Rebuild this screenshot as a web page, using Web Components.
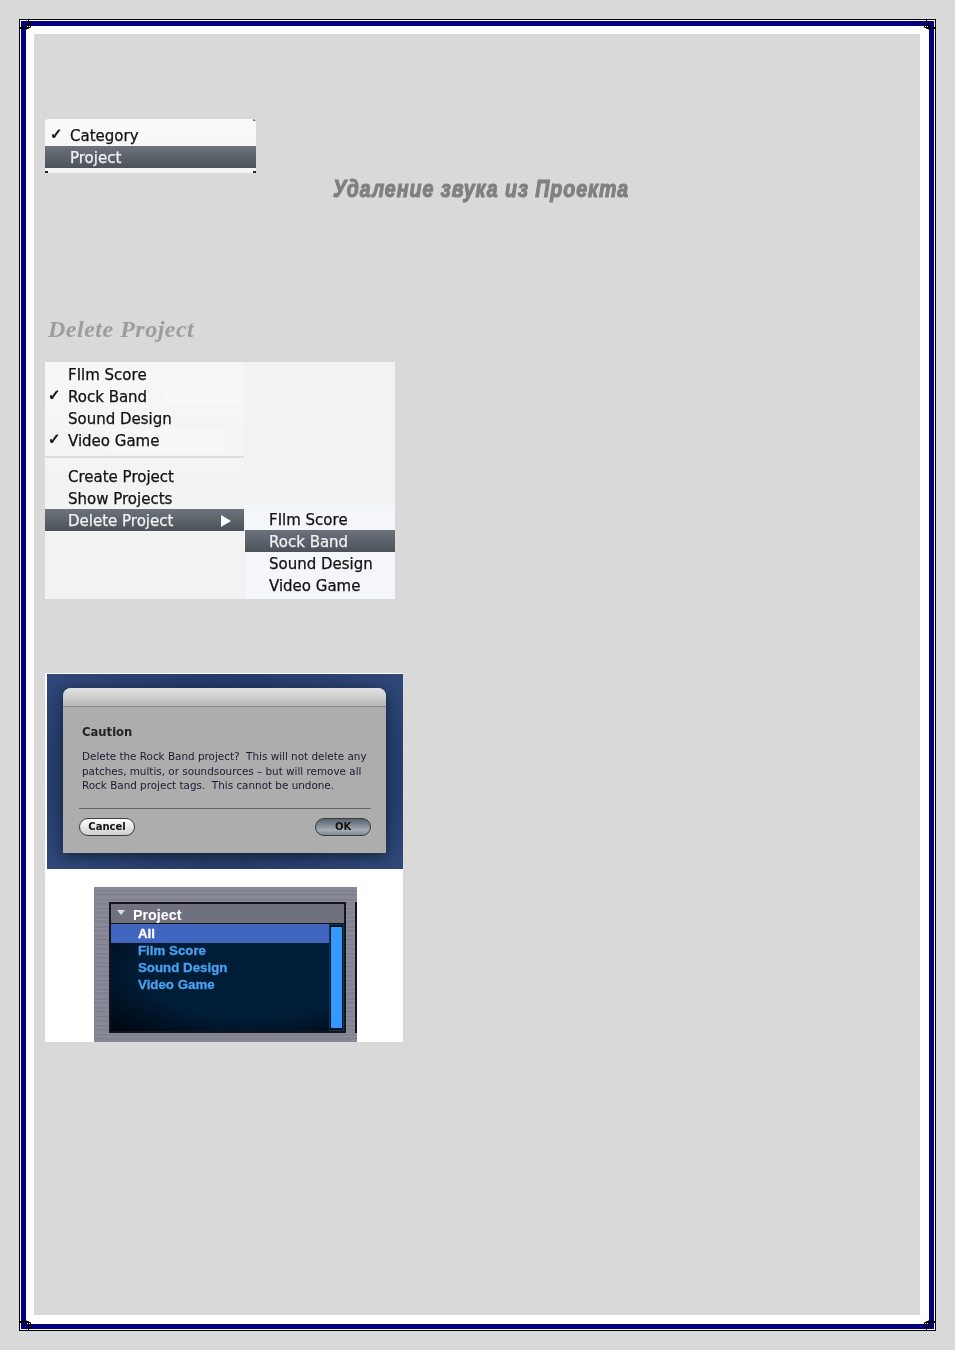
<!DOCTYPE html>
<html><head><meta charset="utf-8"><style>
html,body{margin:0;padding:0;background:#d9d9d9;height:1350px;overflow:hidden}
</style></head><body>
<page-frame>
  <mac-menu style="width:211px;height:54px">
    <menu-row check>Category</menu-row>
    <menu-row hi>Project</menu-row>
  </mac-menu>
  <h-title></h-title>
  <h-sub></h-sub>
  <menu-figure></menu-figure>
  <caution-dialog></caution-dialog>
  <project-panel></project-panel>
</page-frame>
<script>
const FONT='"DejaVu Sans","Noto Sans",sans-serif';
class PageFrame extends HTMLElement{constructor(){super();this.attachShadow({mode:'open'}).innerHTML=`<style>
:host{display:block;position:relative;box-sizing:border-box;width:917px;height:1312px;margin:19px 0 0 19px;border:1px solid #000;padding:1px;background:#fff}
.navy{box-sizing:border-box;height:100%;border:5px solid #000080;background:#fff;padding:8px 9px 9px 8px}
.inner{box-sizing:border-box;height:100%;background:#d9d9d9;padding:85px 0 0 11px;overflow:hidden}
svg{position:absolute;width:14px;height:14px;fill:none;stroke:#000;stroke-width:1}
.tl{left:-1px;top:-1px}.tr{right:-1px;top:-1px;transform:scaleX(-1)}.bl{left:-1px;bottom:-1px;transform:scaleY(-1)}.br{right:-1px;bottom:-1px;transform:scale(-1)}
</style><div class="navy"><div class="inner"><slot></slot></div></div>
${['tl','tr','bl','br'].map(c=>`<svg class="${c}" viewBox="0 0 14 14"><path d="M.5.5H9.5V9.5H.5Z M7.5 2.5V10.5 M.5 8.5H11.5 M11.5 2.5V8.5"/></svg>`).join('')}`}}
class MacMenu extends HTMLElement{constructor(){super();this.attachShadow({mode:'open'}).innerHTML=`<style>
:host{display:block;position:relative;box-sizing:border-box;background:linear-gradient(#fafafa,#f4f4f4);border-radius:4px 4px 0 0;overflow:hidden;padding-top:5px;filter:blur(.45px)}
i{position:absolute;width:3px;height:2px;background:#222}
.a{left:0;bottom:0}.b{right:0;bottom:0}.c{right:0;top:0;background:#777}
</style><slot></slot><i class="a"></i><i class="b"></i><i class="c"></i>`}}
class MenuRow extends HTMLElement{constructor(){super();this.attachShadow({mode:'open'}).innerHTML=`<style>
:host{display:flex;align-items:center;box-sizing:border-box;height:22px;padding-top:2px;font:15px/20px ${FONT};-webkit-text-stroke:.25px currentColor;color:#111;position:relative;padding-left:var(--indent,25px);white-space:nowrap}
:host([hi]){background:linear-gradient(#6c737c,#4c525a);color:#f2f2f2}
.c{position:absolute;left:var(--check-left,5px);top:0;font-weight:700;font-size:15px;-webkit-text-stroke:.7px #111}
.a{position:absolute;right:13px;top:6px;width:0;height:0;border-left:10px solid #fff;border-top:6px solid transparent;border-bottom:6px solid transparent}
</style>${this.hasAttribute('check')?'<span class="c">✓</span>':''}<slot></slot>${this.hasAttribute('arrow')?'<span class="a"></span>':''}`}}
class HTitle extends HTMLElement{constructor(){super();this.attachShadow({mode:'open'}).innerHTML=`<style>
:host{display:block;height:26px;margin-top:3px;text-align:center;padding-right:3px;font:italic 700 24.5px/26px "Liberation Sans",sans-serif;letter-spacing:1.2px;color:#808080;-webkit-text-stroke:1.2px #808080;filter:blur(.5px)}
span{display:inline-block;transform:scaleX(.8)}
</style><span>Удаление звука из Проекта</span>`}}
class HSub extends HTMLElement{constructor(){super();this.attachShadow({mode:'open'}).innerHTML=`<style>
:host{display:block;height:30px;margin:112px 0 18px 3px;font:italic 700 24px/30px "Liberation Serif",serif;letter-spacing:.5px;color:#9d9d9d;filter:blur(.5px)}
</style>Delete Project`}}
class MenuFigure extends HTMLElement{constructor(){super();this.attachShadow({mode:'open'}).innerHTML=`<style>
:host{display:grid;grid-template-columns:199px 150px;column-gap:1px;width:350px;height:237px;background:#f2f2f2;--indent:23px;--check-left:3px;filter:blur(.45px)}
.l{background:linear-gradient(#f8f8f8,#f8f8f8) 120px 24px/75px 20px no-repeat,linear-gradient(#f8f8f8,#f8f8f8) 60px 68px/120px 22px no-repeat,linear-gradient(#f7f7f7,#f3f3f3 70%);height:170px;padding-top:1px;box-sizing:border-box}
.sep{height:2px;background:#dcdcdc;margin:5px 0 7px}
.r{margin-top:143px;height:94px;background:#f5f6fa;padding-top:3px;box-sizing:border-box;--indent:24px}
</style><div class="l">
<menu-row>FIlm Score</menu-row><menu-row check>Rock Band</menu-row><menu-row>Sound Design</menu-row><menu-row check>Video Game</menu-row>
<div class="sep"></div>
<menu-row>Create Project</menu-row><menu-row>Show Projects</menu-row><menu-row hi arrow>Delete Project</menu-row></div>
<div class="r"><menu-row>FIlm Score</menu-row><menu-row hi>Rock Band</menu-row><menu-row>Sound Design</menu-row><menu-row>Video Game</menu-row></div>`}}
class CautionDialog extends HTMLElement{constructor(){super();this.attachShadow({mode:'open'}).innerHTML=`<style>
:host{display:block;box-sizing:border-box;width:358px;height:196px;margin-top:74px;padding:1px 0 0 2px;background:#fff;filter:blur(.35px)}
.bg{box-sizing:border-box;height:195px;width:356px;padding:14px 17px 16px 16px;background:radial-gradient(ellipse at 50% 50%,#223a66 60%,#30497a 100%)}
.d{height:165px;width:323px;background:#adadad;border-radius:8px 8px 0 0;box-shadow:0 3px 12px rgba(0,0,0,.45);display:flex;flex-direction:column;font-family:${FONT};color:#1d1a30}
.h{height:18px;flex:none;background:linear-gradient(#e4e4e4,#b6b6b6);border-bottom:1px solid #8c8c8c;border-radius:8px 8px 0 0}
h2{font:700 11.6px/16px ${FONT};margin:17px 0 0 19px;color:#222}
p{margin:9px 0 0 19px;font-size:10.4px;line-height:14.5px;white-space:pre}
.f{margin:15px 15px 0 16px;border-top:1px solid #666;padding-top:9px;display:flex;justify-content:space-between}
button{all:unset;box-sizing:border-box;width:56px;height:18px;border-radius:9px;border:1.5px solid #3c3c3c;background:linear-gradient(#fff,#cfcfcf);font:700 10px/15px ${FONT};text-align:center;color:#111}
button.ok{background:linear-gradient(#56626f,#a4acb4 70%,#7d8894)}
</style><div class="bg"><div class="d"><div class="h"></div><h2>Caution</h2>
<p>Delete the Rock Band project?  This will not delete any
patches, multis, or soundsources – but will remove all
Rock Band project tags.  This cannot be undone.</p>
<div class="f"><button>Cancel</button><button class="ok">OK</button></div></div></div>`}}
class ProjectPanel extends HTMLElement{constructor(){super();this.attachShadow({mode:'open'}).innerHTML=`<style>
:host{display:block;box-sizing:border-box;width:358px;height:173px;background:#fff;padding:18px 46px 0 49px;filter:blur(.35px)}
.m{box-sizing:border-box;height:155px;width:263px;padding:15px 0 0 15px;display:flex;gap:9px;overflow:hidden;background:repeating-linear-gradient(#878998 0 3px,#7f818f 3px 5px,#8d8f9d 5px 6px,#818391 6px 9px)}
.b{box-sizing:border-box;flex:none;width:237px;height:131px;border:2px solid #14151c;display:flex;flex-direction:column;background:#001a30}
.s{flex:none;width:3px;height:131px;background:#10141e}
.hd{height:19px;flex:none;background:#70717f;font:700 14.3px/23px "Liberation Sans",sans-serif;color:#fff;position:relative;padding-left:22px;border-bottom:1px solid #111}
.hd i{position:absolute;left:6px;top:6px;border-top:5px solid #ddd;border-left:4px solid transparent;border-right:4px solid transparent}
.c{flex:1;display:flex;background:radial-gradient(ellipse at 60% 45%,#001d38 55%,#00060e 100%)}
.l{width:218px;font:700 13.3px/17px "Liberation Sans",sans-serif;color:#4aa0f0;-webkit-text-stroke:.3px currentColor}
.l div{padding-left:27px}.l .all{background:#4166c0;color:#fff;height:19px;line-height:19px;margin-bottom:-1px}
.t{flex:1;border:1px solid #0e3a55;padding:2px 1px;background:#02101c;box-sizing:border-box}
.t div{height:100%;background:#3399ff}
</style><div class="m"><div class="b"><div class="hd"><i></i>Project</div><div class="c"><div class="l"><div class="all">All</div><div>Film Score</div><div>Sound Design</div><div>Video Game</div></div><div class="t"><div></div></div></div></div><div class="s"></div></div>`}}
customElements.define('page-frame',PageFrame);customElements.define('mac-menu',MacMenu);customElements.define('menu-row',MenuRow);
customElements.define('h-title',HTitle);customElements.define('h-sub',HSub);customElements.define('menu-figure',MenuFigure);
customElements.define('caution-dialog',CautionDialog);customElements.define('project-panel',ProjectPanel);
</script></body></html>
